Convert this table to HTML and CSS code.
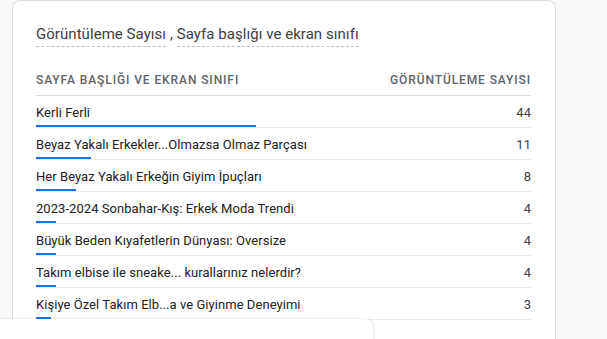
FILE: index.html
```html
<!DOCTYPE html>
<html lang="tr">
<head>
  <meta charset="UTF-8">
  <meta name="viewport" content="width=device-width, initial-scale=1.0">
  <title>Sayfa başlığı ve ekran sınıfı</title>
  <link rel="stylesheet" href="styles.css">
</head>
<body>
  <div class="report-card">
    <div class="card-title">
      <span class="dim">Görüntüleme Sayısı</span> , <span class="dim">Sayfa başlığı ve ekran sınıfı</span>
    </div>

    <div class="table-head">
      <span>Sayfa başlığı ve ekran sınıfı</span>
      <span>Görüntüleme sayısı</span>
    </div>

    <div class="table-body" id="tableBody">
      <!-- satırlar script ile doldurulur -->
    </div>
  </div>

  <div class="next-card"></div>

  <script>
    const rows = [
      { title: 'Kerli Ferli', views: 44 },
      { title: 'Beyaz Yakalı Erkekler...Olmazsa Olmaz Parçası', views: 11 },
      { title: 'Her Beyaz Yakalı Erkeğin Giyim İpuçları', views: 8 },
      { title: '2023-2024 Sonbahar-Kış: Erkek Moda Trendi', views: 4 },
      { title: 'Büyük Beden Kıyafetlerin Dünyası: Oversize', views: 4 },
      { title: 'Takım elbise ile sneake... kurallarınız nelerdir?', views: 4 },
      { title: 'Kişiye Özel Takım Elb...a ve Giyinme Deneyimi', views: 3 }
    ];

    const max = Math.max(...rows.map(r => r.views));
    const body = document.getElementById('tableBody');

    rows.forEach(r => {
      const pct = (r.views / max) * 44.4;
      body.innerHTML += `
        <div class="row">
          <div class="row-line">
            <span class="row-title">${r.title}</span>
            <span class="row-value">${r.views}</span>
          </div>
          <div class="row-bar" style="width: ${pct}%"></div>
        </div>
      `;
    });
  </script>
</body>
</html>
```

FILE: styles.css
```css
:root {
  --blue: #1a73e8;
  --text: #3c4043;
  --muted: #5f6368;
  --line: #e8eaed;
  --border: #dadce0;
  --page-bg: #f8f9fa;
}
body {
  margin: 0;
  background: var(--page-bg);
  font-family: Roboto, 'Noto Sans', sans-serif;
  color: var(--text);
  height: 339px;
  overflow: hidden;
  position: relative;
}
.report-card {
  margin-left: 12px;
  width: 495px;
  height: 315px;
  padding: 23px 24px 0 23px;
  background: #fff;
  border: 1px solid var(--border);
  border-bottom: none;
  border-radius: 8px 8px 0 0;
}
.card-title {
  font-size: 15px;
  line-height: 20px;
  letter-spacing: 0.05px;
  color: var(--text);
}
.card-title .dim {
  padding-bottom: 3px;
  border-bottom: 1px dashed #bdc1c6;
}
.table-head {
  display: flex;
  justify-content: space-between;
  margin-top: 28px;
  padding-bottom: 7px;
  border-bottom: 1px solid var(--border);
  font-size: 12px;
  line-height: 16px;
  font-weight: 500;
  letter-spacing: 0.9px;
  text-transform: uppercase;
  color: var(--muted);
}
.row {
  padding-top: 9px;
  border-bottom: 1px solid var(--line);
}
.row-line {
  display: flex;
  justify-content: space-between;
  font-size: 13px;
  line-height: 16px;
  letter-spacing: 0.05px;
}
.row-title {
  color: #202124;
}
.row-bar {
  height: 2px;
  margin-top: 4px;
  background: var(--blue);
}
.next-card {
  position: absolute;
  left: -10px;
  top: 319px;
  width: 383px;
  height: 30px;
  background: #fff;
  border-radius: 8px;
  box-shadow: 0 1px 4px rgba(60, 64, 67, 0.18), 0 0 1px rgba(60, 64, 67, 0.2);
}
```
